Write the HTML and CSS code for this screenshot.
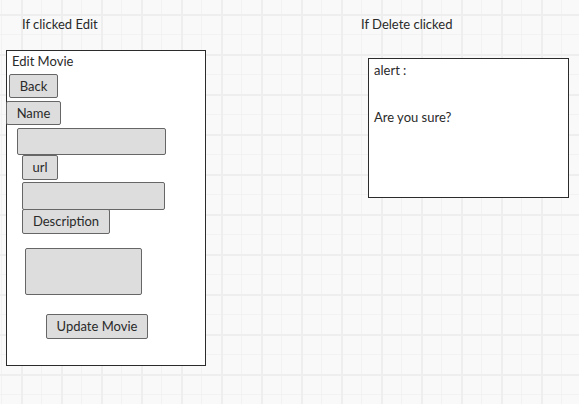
FILE: index.html
```html
<!DOCTYPE html>
<html>
<head>
<meta charset="utf-8">
<link rel="stylesheet" href="styles.css">
</head>
<body>
<div class="canvas">
  <section class="col col-edit">
    <div class="heading heading-edit">If clicked Edit</div>
    <div class="panel">
      <div class="panel-title">Edit Movie</div>
      <div class="btn btn-back">Back</div>
      <div class="btn btn-name">Name</div>
      <div class="field field-name"></div>
      <div class="btn btn-url">url</div>
      <div class="field field-url"></div>
      <div class="btn btn-desc">Description</div>
      <div class="field field-desc"></div>
      <div class="btn btn-update">Update Movie</div>
    </div>
  </section>
  <section class="col col-delete">
    <div class="heading heading-delete">If Delete clicked</div>
    <div class="alert">
      <div class="alert-line">alert :</div>
      <div class="alert-line"></div>
      <div class="alert-line">Are you sure?</div>
    </div>
  </section>
</div>
</body>
</html>
```

FILE: styles.css
```css
html, body {
  margin: 0;
  padding: 0;
}
body {
  width: 579px;
  height: 404px;
  overflow: hidden;
  background-color: #f9f9f9;
  background-image:
    linear-gradient(to right, #eeeeee 2px, transparent 2px),
    linear-gradient(to bottom, #eeeeee 2px, transparent 2px),
    linear-gradient(to right, #f2f2f2 1px, transparent 1px),
    linear-gradient(to bottom, #f2f2f2 1px, transparent 1px);
  background-size: 40px 40px, 40px 40px, 20px 20px, 20px 20px;
  background-position: 21px 0, 0 14px, 1px 0, 0 14px;
  font-family: "Lato", "Noto Sans", sans-serif;
  font-size: 13px;
  color: #2a2a2a;
}
.canvas {
  display: flex;
  align-items: flex-start;
}
.col-edit {
  margin-left: 6px;
  width: 200px;
}
.col-delete {
  margin-left: 155px;
}
.heading {
  height: 16px;
  line-height: 16px;
  margin-top: 16px;
}
.heading-edit {
  padding-left: 16px;
}
.heading-delete {
  padding-left: 0;
}
.panel {
  margin-top: 18px;
  width: 200px;
  height: 316px;
  box-sizing: border-box;
  border: 1px solid #2b2b2b;
  background: #ffffff;
}
.panel-title {
  margin-top: 1px;
  height: 20px;
  line-height: 18px;
  padding-left: 5px;
}
.btn, .field {
  box-sizing: border-box;
  border: 1px solid #666666;
  border-radius: 2px;
  background: #dddddd;
}
.btn {
  display: flex;
  align-items: center;
  justify-content: center;
  line-height: 1;
}
.btn-back {
  margin: 2px 0 0 2px;
  width: 49px;
  height: 24px;
}
.btn-name {
  margin: 3px 0 0 -1px;
  width: 55px;
  height: 24px;
}
.field-name {
  margin: 3px 0 0 10px;
  width: 149px;
  height: 27px;
}
.btn-url {
  margin: 0 0 0 15px;
  width: 36px;
  height: 25px;
}
.field-url {
  margin: 2px 0 0 15px;
  width: 143px;
  height: 28px;
}
.btn-desc {
  margin: -1px 0 0 15px;
  width: 88px;
  height: 25px;
}
.field-desc {
  margin: 14px 0 0 18px;
  width: 117px;
  height: 47px;
}
.btn-update {
  margin: 19px 0 0 39px;
  width: 102px;
  height: 25px;
}
.alert {
  margin: 26px 0 0 7px;
  width: 201px;
  height: 140px;
  box-sizing: border-box;
  border: 1px solid #2b2b2b;
  background: #ffffff;
  padding: 2px 5px 0;
}
.alert-line {
  height: 23.5px;
  line-height: 18px;
}
```
